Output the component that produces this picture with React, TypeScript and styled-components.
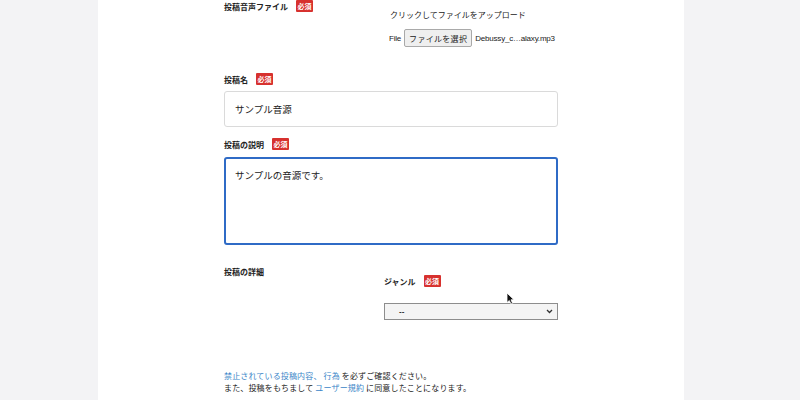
import styled, { createGlobalStyle } from "styled-components";

const GlobalStyle = createGlobalStyle`
  html, body {
    margin: 0;
    padding: 0;
    background: #f3f3f5;
    font-family: "Liberation Sans", "Noto Sans CJK JP", sans-serif;
    color: #222;
  }
`;

const Page = styled.div`
  width: 800px;
  height: 400px;
  overflow: hidden;
  position: relative;
`;

const Panel = styled.div`
  margin-left: 98px;
  width: 586px;
  min-height: 400px;
  background: #fff;
  box-sizing: border-box;
  padding: 0 126px;
`;

const Row = styled.div<{ $top?: number }>`
  display: grid;
  grid-template-columns: 160px 174px;
  margin-top: ${({ $top }) => $top ?? 0}px;
`;

const Field = styled.div<{ $top?: number }>`
  margin-top: ${({ $top }) => $top ?? 0}px;
`;

const LabelRow = styled.div<{ $top?: number }>`
  display: flex;
  align-items: center;
  height: 12px;
  gap: 8px;
  margin-top: ${({ $top }) => $top ?? 0}px;
`;

const Label = styled.span`
  font-family: "Noto Sans CJK JP", sans-serif;
  font-weight: 700;
  font-size: 8px;
  color: #222;
`;

const Badge = styled.span`
  display: inline-flex;
  align-items: center;
  justify-content: center;
  width: 17px;
  height: 12px;
  background: #d7312e;
  color: #fff;
  font-family: "Noto Sans CJK JP", sans-serif;
  font-weight: 700;
  font-size: 7px;
  border-radius: 1px;
`;

const Hint = styled.div`
  margin-top: 9px;
  margin-left: 6px;
  height: 12px;
  line-height: 12px;
  font-family: "Noto Sans CJK JP", sans-serif;
  font-size: 8px;
  color: #222;
`;

const FileLine = styled.div`
  display: flex;
  align-items: center;
  gap: 3px;
  margin-top: 8px;
  margin-left: 5px;
  font-size: 8px;
  letter-spacing: -0.2px;
  color: #222;
  white-space: nowrap;
`;

const FileButton = styled.span`
  display: inline-flex;
  align-items: center;
  height: 18px;
  box-sizing: border-box;
  padding: 0 4px;
  border: 1px solid #a9a9a9;
  border-radius: 2px;
  background: #efefef;
  font-family: "Noto Sans CJK JP", sans-serif;
  font-size: 8px;
  letter-spacing: 0.3px;
  color: #222;
`;

const TextBox = styled.div`
  margin-top: 6px;
  height: 36px;
  box-sizing: border-box;
  border: 1px solid #dadada;
  border-radius: 3px;
  padding: 0 10px;
  display: flex;
  align-items: center;
  font-family: "Noto Sans CJK JP", sans-serif;
  font-size: 9.5px;
  color: #222;
`;

const TextArea = styled.div`
  margin-top: 7px;
  height: 88px;
  box-sizing: border-box;
  border: 2px solid #2f6bc6;
  border-radius: 3px;
  padding: 9px 9px;
  font-family: "Noto Sans CJK JP", sans-serif;
  font-size: 9.5px;
  line-height: 14px;
  color: #222;
`;

const SelectBox = styled.div`
  margin-top: 16px;
  height: 17px;
  box-sizing: border-box;
  border: 1px solid #8d8d8d;
  background: #f4f4f4;
  display: flex;
  align-items: center;
  justify-content: space-between;
  padding: 0 4px 0 14px;
  font-size: 8px;
  font-weight: 700;
  color: #222;
`;

const Footer = styled.div`
  margin-top: 50px;
  font-family: "Noto Sans CJK JP", sans-serif;
  font-size: 8px;
  line-height: 12px;
  letter-spacing: 0.15px;
  color: #222;
  white-space: nowrap;
`;

const Link = styled.a`
  color: #3b86c8;
  text-decoration: none;
`;

const Cursor = styled.svg`
  position: absolute;
  left: 506px;
  top: 292px;
`;

export default function App() {
  return (
    <Page>
      <GlobalStyle />
      <Panel>
        <Row>
          <LabelRow>
            <Label>投稿音声ファイル</Label>
            <Badge>必須</Badge>
          </LabelRow>
          <div>
            <Hint>クリックしてファイルをアップロード</Hint>
            <FileLine>
              File
              <FileButton>ファイルを選択</FileButton>
              Debussy_c…alaxy.mp3
            </FileLine>
          </div>
        </Row>

        <Field $top={26}>
          <LabelRow>
            <Label>投稿名</Label>
            <Badge>必須</Badge>
          </LabelRow>
          <TextBox>サンプル音源</TextBox>
        </Field>

        <Field $top={11}>
          <LabelRow>
            <Label>投稿の説明</Label>
            <Badge>必須</Badge>
          </LabelRow>
          <TextArea>サンプルの音源です。</TextArea>
        </Field>

        <Row $top={20}>
          <LabelRow>
            <Label>投稿の詳細</Label>
          </LabelRow>
          <div>
            <LabelRow $top={10}>
              <Label>ジャンル</Label>
              <Badge>必須</Badge>
            </LabelRow>
            <SelectBox>
              <span>--</span>
              <svg width="7" height="5" viewBox="0 0 7 5">
                <path d="M1 1 L3.5 3.5 L6 1" fill="none" stroke="#333" strokeWidth="1.3" />
              </svg>
            </SelectBox>
          </div>
        </Row>

        <Footer>
          <Link>禁止されている投稿内容、 行為</Link> を必ずご確認ください。
          <br />
          また、投稿をもちまして <Link>ユーザー規約</Link> に同意したことになります。
        </Footer>
      </Panel>
      <Cursor width="9" height="13" viewBox="0 0 9 13">
        <path d="M1 1 L1 10.5 L3.3 8.5 L5 12 L6.6 11.3 L5 7.8 L8 7.8 Z" fill="#111" stroke="#fff" strokeWidth="0.8" />
      </Cursor>
    </Page>
  );
}
